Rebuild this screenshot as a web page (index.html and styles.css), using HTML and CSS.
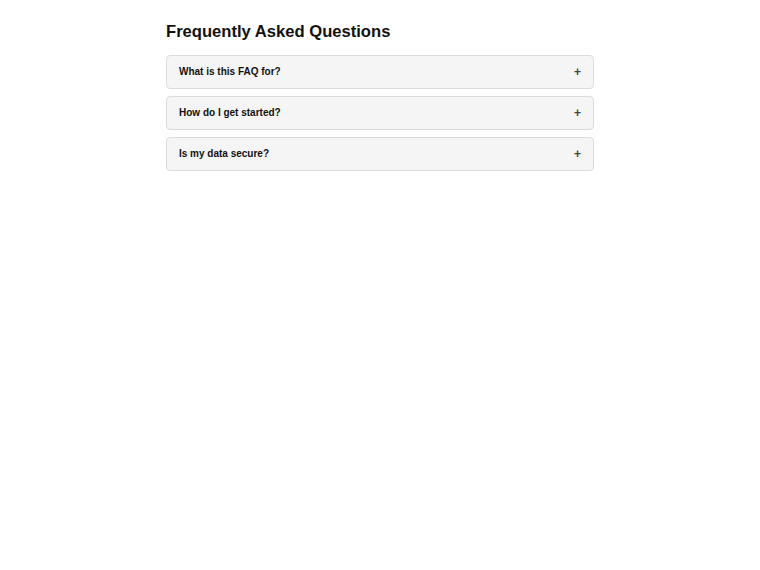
FILE: index.html
```html
<!DOCTYPE html>
<html lang="en">
<head>
  <meta charset="UTF-8" />
  <meta name="viewport" content="width=device-width, initial-scale=1" />
  <title>FAQ</title>
  <link rel="stylesheet" href="styles.css">
</head>
<body>

  <div class="faq">
    <h1>Frequently Asked Questions</h1>

    <div class="faq-item">
      <button class="faq-question">What is this FAQ for?<span class="toggle">+</span></button>
    </div>
    <div class="faq-item">
      <button class="faq-question">How do I get started?<span class="toggle">+</span></button>
    </div>
    <div class="faq-item">
      <button class="faq-question">Is my data secure?<span class="toggle">+</span></button>
    </div>
  </div>

</body>
</html>
```

FILE: styles.css
```css
body {
  margin: 0;
  background-color: #fff;
  color: #111;
  font-family: "Liberation Sans", Arial, sans-serif;
}
.faq {
  max-width: 428px;
  margin: 0 auto;
  padding-top: 21px;
}
.faq h1 {
  margin: 0 0 12px;
  font-size: 16.6px;
  line-height: 22px;
  font-weight: bold;
}
.faq-item {
  margin-bottom: 7px;
  border: 1px solid #dcdcdc;
  border-radius: 4px;
  background-color: #f5f5f5;
}
.faq-question {
  display: flex;
  justify-content: space-between;
  align-items: center;
  width: 100%;
  padding: 9px 12px;
  border: none;
  background: none;
  font-family: inherit;
  font-size: 10px;
  line-height: 14px;
  font-weight: bold;
  color: #111;
  text-align: left;
  cursor: pointer;
}
.toggle {
  font-size: 12px;
  color: #444;
}
```
